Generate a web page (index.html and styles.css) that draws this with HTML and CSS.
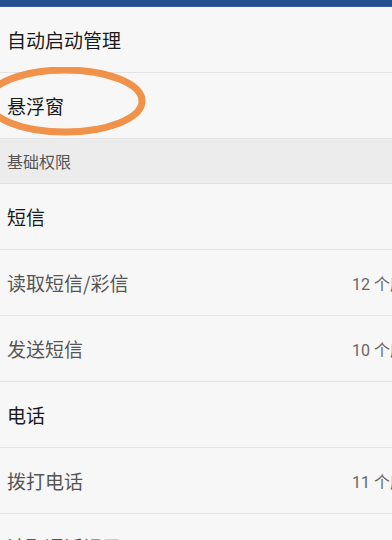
FILE: index.html
```html
<!DOCTYPE html>
<html>
<head>
<meta charset="utf-8">
<link rel="stylesheet" href="styles.css">
</head>
<body>
<div class="page">
  <div class="topbar"></div>
  <div class="list">
    <div class="row"><span class="title">自动启动管理</span></div>
    <div class="row"><span class="title">悬浮窗</span></div>
    <div class="section">基础权限</div>
    <div class="row"><span class="title">短信</span></div>
    <div class="row"><span class="item">读取短信/彩信</span><span class="count">12 个应用</span></div>
    <div class="row"><span class="item">发送短信</span><span class="count">10 个应用</span></div>
    <div class="row"><span class="title">电话</span></div>
    <div class="row"><span class="item">拨打电话</span><span class="count">11 个应用</span></div>
    <div class="row"><span class="item">读取通话记录</span><span class="count">9 个应用</span></div>
  </div>
  <svg class="circle" width="180" height="80" viewBox="0 0 180 80">
    <ellipse cx="80" cy="34" rx="77" ry="31" fill="none" stroke="#f0924a" stroke-width="7"/>
  </svg>
</div>
</body>
</html>
```
FILE: styles.css
```css
html, body {
  margin: 0;
  padding: 0;
  overflow: hidden;
  background: #f7f7f7;
}
.page {
  position: relative;
  width: 392px;
  height: 540px;
  overflow: hidden;
  font-family: "Noto Sans CJK SC", "Roboto", sans-serif;
}
.topbar {
  height: 6px;
  background: #25508e;
  border-bottom: 1px solid #3a5f95;
}
.list {
  width: 430px;
}
.row {
  display: flex;
  align-items: center;
  height: 65px;
  padding: 0 8px 0 7px;
  border-bottom: 1px solid #e3e3e3;
  background: #f7f7f7;
}
.title {
  font-size: 19px;
  color: #1a1a1a;
}
.item {
  font-size: 19px;
  color: #555;
}
.count {
  margin-left: auto;
  font-size: 16px;
  color: #666;
  font-family: "Roboto", "Noto Sans CJK SC", sans-serif;
}
.section {
  height: 44px;
  display: flex;
  align-items: center;
  padding-left: 7px;
  background: #ececec;
  font-size: 16px;
  color: #555;
  border-bottom: 1px solid #e0e0e0;
}
.circle {
  position: absolute;
  left: -15px;
  top: 67px;
}
```
